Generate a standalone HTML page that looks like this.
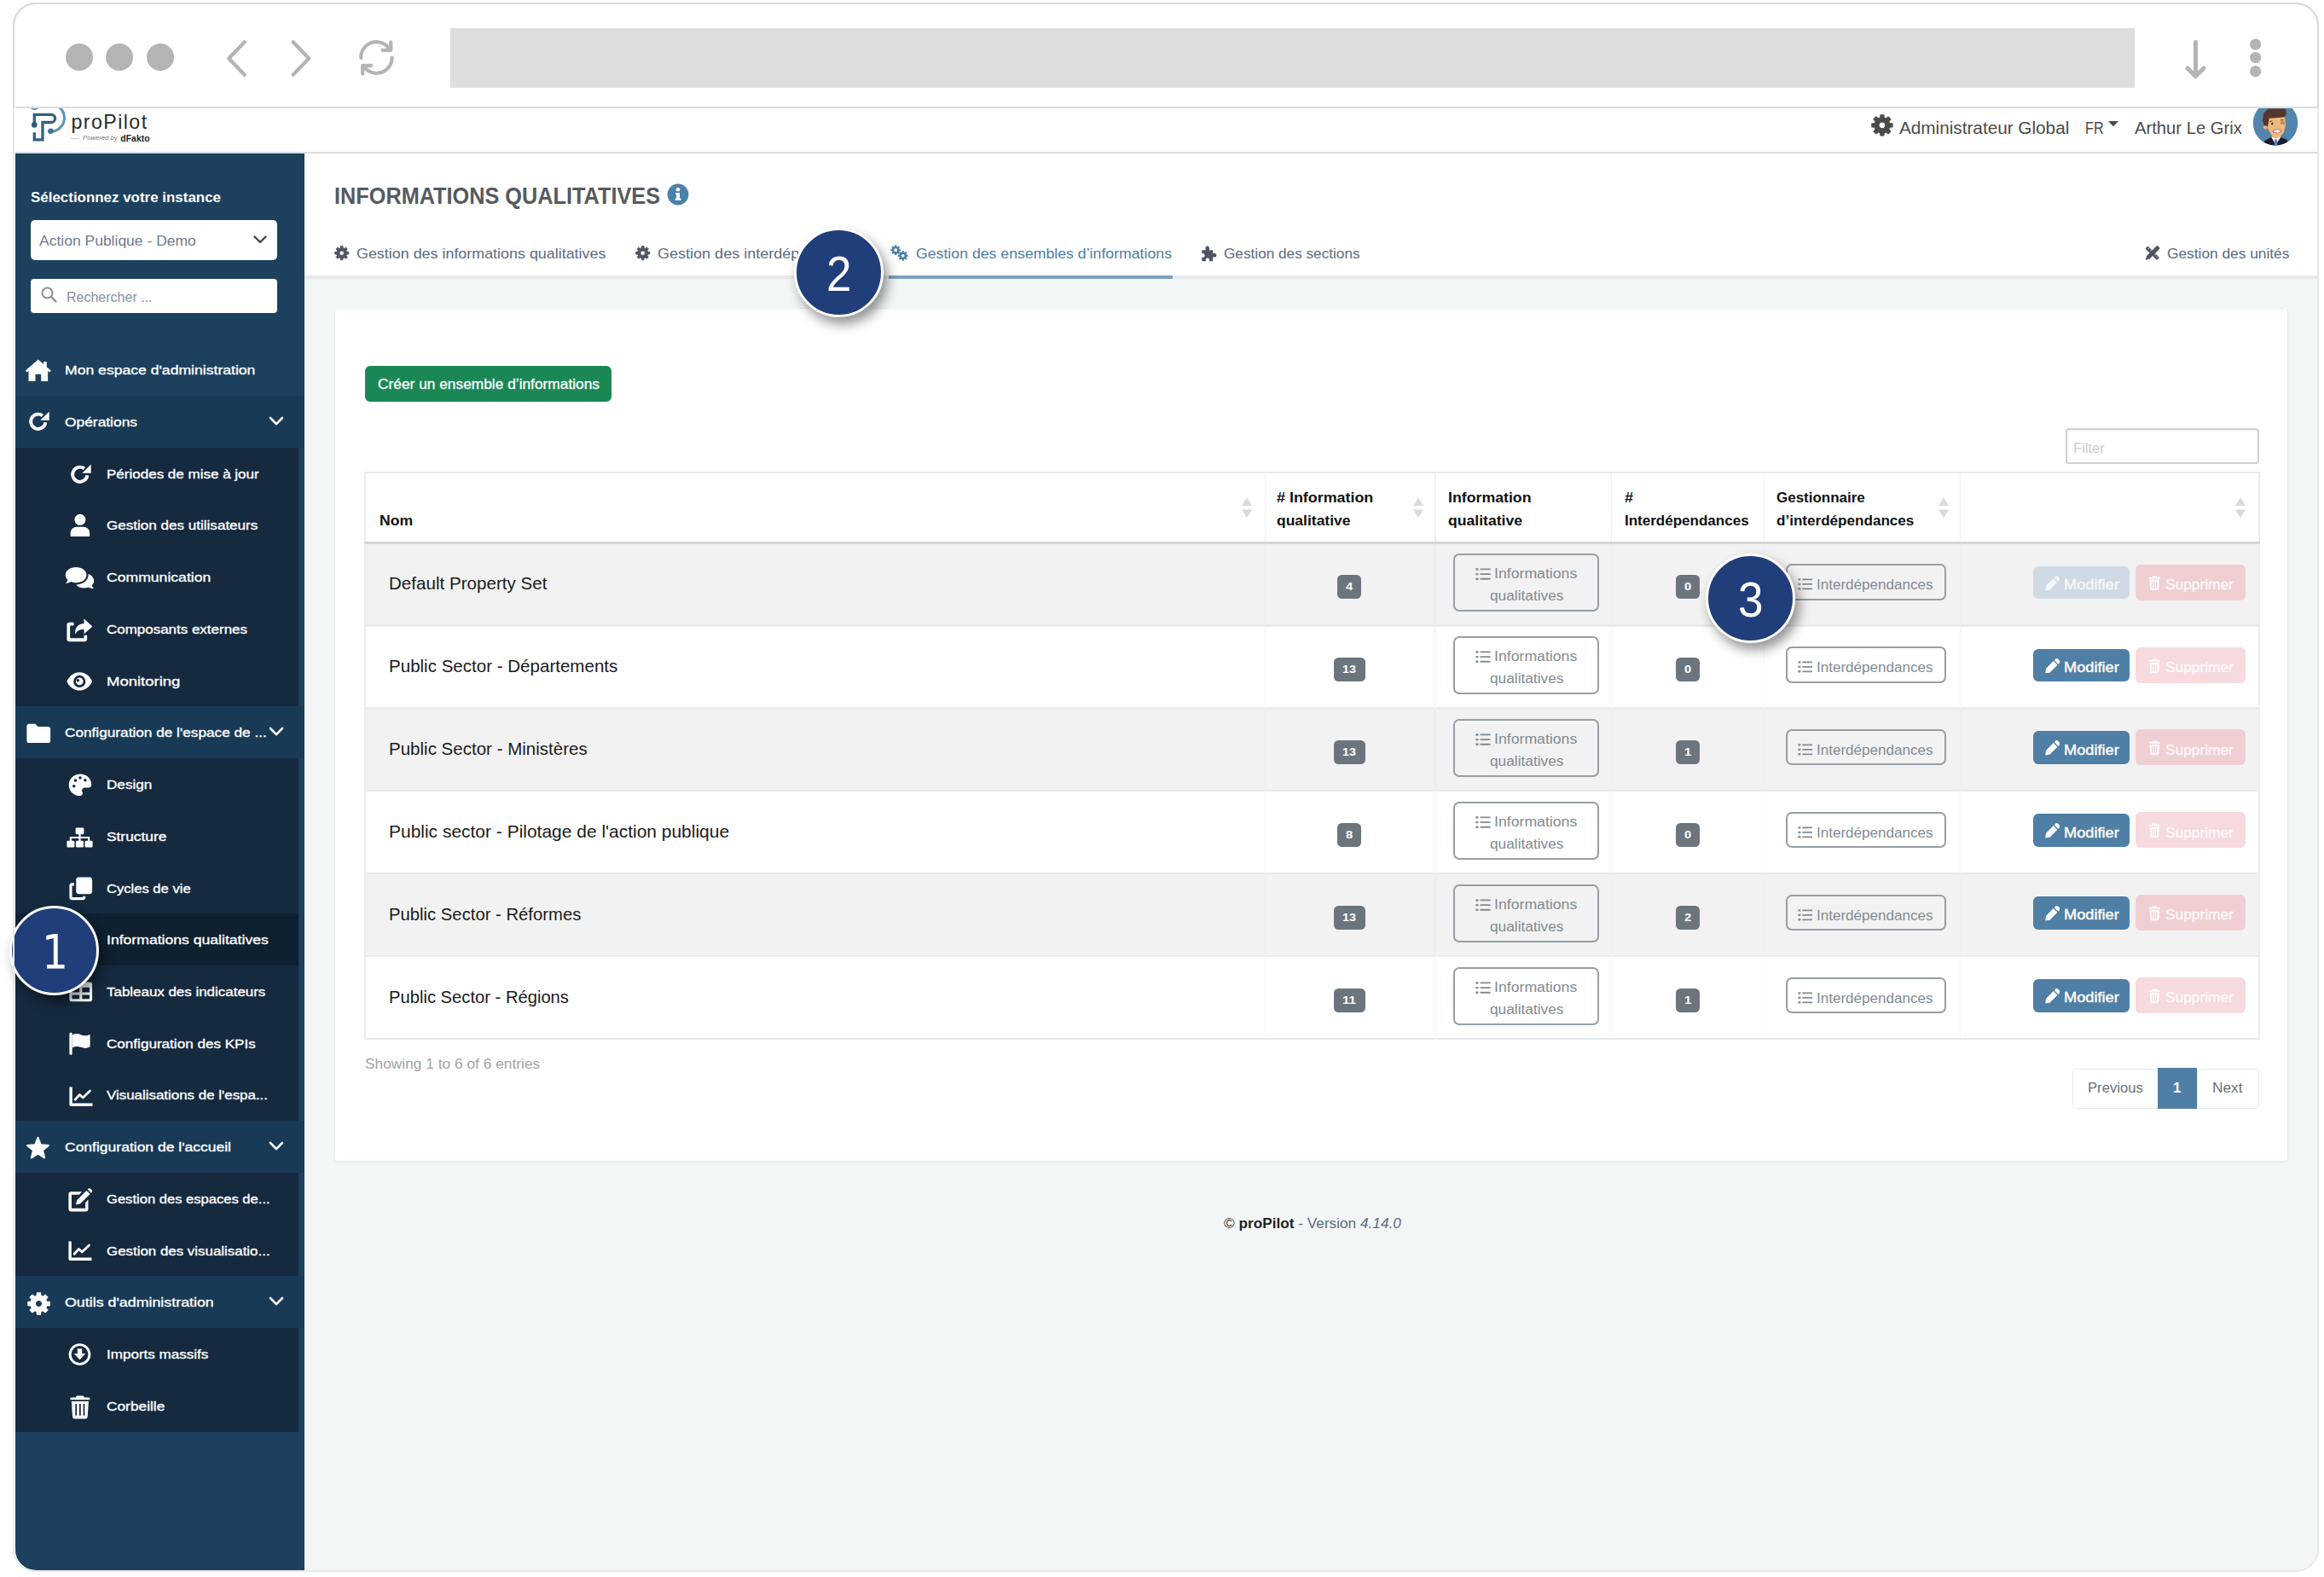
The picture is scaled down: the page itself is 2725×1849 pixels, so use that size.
<!DOCTYPE html>
<html lang="fr"><head><meta charset="utf-8"><title>proPilot - Informations qualitatives</title>
<style>
html,body{margin:0;padding:0;}
body{width:2725px;height:1849px;background:#fff;position:relative;overflow:hidden;font-family:"Liberation Sans",sans-serif;}
.a{position:absolute;display:block;box-sizing:border-box;}
.t{position:absolute;display:block;white-space:nowrap;transform-origin:0 50%;}
</style></head>
<body>
<div class="a" style="left:357.0px;top:180.0px;width:2360.0px;height:1661.0px;background:#f3f6f7;border-bottom-right-radius:24px;"></div>
<div class="a" style="left:357.0px;top:180.0px;width:2360.0px;height:143.0px;background:#fff;"></div>
<div class="a" style="left:18.0px;top:127.0px;width:2699.0px;height:52.0px;background:#fff;"></div>
<div class="a" style="left:18.0px;top:178.0px;width:2699.0px;height:2.4px;background:#dcdcdc;"></div>
<div class="a" style="left:18.0px;top:124.5px;width:2699.0px;height:2.6px;background:#dddddc;"></div>
<div class="a" style="left:18.0px;top:180.0px;width:339.0px;height:1661.0px;background:#1c405e;border-bottom-left-radius:24px;"></div>
<div class="a" style="left:76.7px;top:51.3px;width:32.0px;height:32.0px;background:#b4b4b4;border-radius:50%;"></div>
<div class="a" style="left:124.4px;top:51.3px;width:32.0px;height:32.0px;background:#b4b4b4;border-radius:50%;"></div>
<div class="a" style="left:172.0px;top:51.3px;width:32.0px;height:32.0px;background:#b4b4b4;border-radius:50%;"></div>
<svg class="a" style="left:240.0px;top:20.0px;" width="320.0" height="100.0" viewBox="240 20 320 100"><g fill="none" stroke="#b4b4b4" stroke-width="4.2" stroke-linecap="round" stroke-linejoin="round"><path d="M286.8 49.2 L268.2 68.5 L286.8 87.8"/><path d="M343.6 49.2 L362.3 68.5 L343.6 87.8"/><path d="M423.3 68 A18 18 0 0 1 457 58.3"/><path d="M458.3 49.3 L458.3 58.8 L448.6 58.8"/><path d="M459.6 67.6 A18 18 0 0 1 426.3 77.3"/><path d="M425.2 86.6 L425.2 76.9 L435 76.9"/></g></svg>
<div class="a" style="left:527.8px;top:33.0px;width:1975.2px;height:69.6px;background:#dededc;"></div>
<svg class="a" style="left:2550.0px;top:40.0px;" width="120.0" height="60.0" viewBox="2550 40 120 60"><g fill="none" stroke="#b4b4b4" stroke-width="5" stroke-linecap="round" stroke-linejoin="round"><path d="M2574.5 49.2 L2574.5 88"/><path d="M2565 80 L2574.5 89.4 L2584 80"/></g><g fill="#b4b4b4"><circle cx="2644.7" cy="52" r="6.6"/><circle cx="2644.7" cy="67.5" r="6.6"/><circle cx="2644.7" cy="83.7" r="6.6"/></g></svg>
<div class="a" style="left:18.0px;top:463.9px;width:339.0px;height:61.0px;background:#193a56;"></div>
<div class="a" style="left:18.0px;top:524.6px;width:332.0px;height:61.0px;background:#15293f;"></div>
<div class="a" style="left:18.0px;top:585.4px;width:332.0px;height:61.0px;background:#15293f;"></div>
<div class="a" style="left:18.0px;top:646.1px;width:332.0px;height:61.0px;background:#15293f;"></div>
<div class="a" style="left:18.0px;top:706.8px;width:332.0px;height:61.0px;background:#15293f;"></div>
<div class="a" style="left:18.0px;top:767.5px;width:332.0px;height:61.0px;background:#15293f;"></div>
<div class="a" style="left:18.0px;top:828.2px;width:339.0px;height:61.0px;background:#193a56;"></div>
<div class="a" style="left:18.0px;top:889.0px;width:332.0px;height:61.0px;background:#15293f;"></div>
<div class="a" style="left:18.0px;top:949.7px;width:332.0px;height:61.0px;background:#15293f;"></div>
<div class="a" style="left:18.0px;top:1010.4px;width:332.0px;height:61.0px;background:#15293f;"></div>
<div class="a" style="left:18.0px;top:1071.1px;width:332.0px;height:61.0px;background:#0f2030;"></div>
<div class="a" style="left:18.0px;top:1131.8px;width:332.0px;height:61.0px;background:#15293f;"></div>
<div class="a" style="left:18.0px;top:1192.6px;width:332.0px;height:61.0px;background:#15293f;"></div>
<div class="a" style="left:18.0px;top:1253.3px;width:332.0px;height:61.0px;background:#15293f;"></div>
<div class="a" style="left:18.0px;top:1314.0px;width:339.0px;height:61.0px;background:#193a56;"></div>
<div class="a" style="left:18.0px;top:1374.7px;width:332.0px;height:61.0px;background:#15293f;"></div>
<div class="a" style="left:18.0px;top:1435.4px;width:332.0px;height:61.0px;background:#15293f;"></div>
<div class="a" style="left:18.0px;top:1496.2px;width:339.0px;height:61.0px;background:#193a56;"></div>
<div class="a" style="left:18.0px;top:1556.9px;width:332.0px;height:61.0px;background:#15293f;"></div>
<div class="a" style="left:18.0px;top:1617.6px;width:332.0px;height:61.0px;background:#15293f;"></div>
<span class="t" id="t1" style="top:220.6px;font-size:17px;line-height:22px;color:#fff;font-weight:700;left:36.1px;transform:scaleX(0.9960);">Sélectionnez votre instance</span>
<div class="a" style="left:36.0px;top:258.0px;width:289.0px;height:46.7px;background:#fff;border-radius:5px;"></div>
<span class="t" id="t2" style="top:271.7px;font-size:17px;line-height:22px;color:#6d7b90;left:46.0px;transform:scaleX(1.0292);">Action Publique - Demo</span>
<svg class="a" style="left:295.0px;top:273.0px;" width="20.0" height="16.0" viewBox="0 0 20 16"><path d="M3.5 4.5 L10 11 L16.5 4.5" fill="none" stroke="#3a4654" stroke-width="2.4" stroke-linecap="round" stroke-linejoin="round"/></svg>
<div class="a" style="left:36.0px;top:327.0px;width:289.0px;height:39.6px;background:#fff;border-radius:4px;"></div>
<svg class="a" style="left:47.0px;top:335.0px;" width="22.0" height="22.0" viewBox="0 0 22 22"><circle cx="8.5" cy="8.5" r="6" fill="none" stroke="#8b8f96" stroke-width="2"/><path d="M13 13 L18.5 18.5" stroke="#8b8f96" stroke-width="2.4" stroke-linecap="round"/></svg>
<span class="t" id="t3" style="top:338.1px;font-size:16.5px;line-height:21px;color:#8791a0;left:77.5px;transform:scaleX(0.9698);">Rechercher ...</span>
<span class="t" id="t4" style="top:424.3px;font-size:15.3px;line-height:20px;color:#fff;-webkit-text-stroke:0.35px #fff;left:75.6px;transform:scaleX(1.1501);">Mon espace d'administration</span>
<span class="t" id="t5" style="top:485.0px;font-size:15.3px;line-height:20px;color:#fff;-webkit-text-stroke:0.35px #fff;left:75.6px;transform:scaleX(1.1359);">Opérations</span>
<svg class="a" style="left:314.0px;top:485.9px;" width="20.0" height="16.0" viewBox="0 0 20 16"><path d="M3 4 L10 11.2 L17 4" fill="none" stroke="#fff" stroke-width="2.6" stroke-linecap="round" stroke-linejoin="round"/></svg>
<span class="t" id="t6" style="top:545.7px;font-size:15.3px;line-height:20px;color:#fff;-webkit-text-stroke:0.35px #fff;left:124.7px;transform:scaleX(1.1120);">Périodes de mise à jour</span>
<span class="t" id="t7" style="top:606.4px;font-size:15.3px;line-height:20px;color:#fff;-webkit-text-stroke:0.35px #fff;left:124.7px;transform:scaleX(1.1151);">Gestion des utilisateurs</span>
<span class="t" id="t8" style="top:667.1px;font-size:15.3px;line-height:20px;color:#fff;-webkit-text-stroke:0.35px #fff;left:124.7px;transform:scaleX(1.1507);">Communication</span>
<span class="t" id="t9" style="top:727.9px;font-size:15.3px;line-height:20px;color:#fff;-webkit-text-stroke:0.35px #fff;left:124.7px;transform:scaleX(1.1089);">Composants externes</span>
<span class="t" id="t10" style="top:788.6px;font-size:15.3px;line-height:20px;color:#fff;-webkit-text-stroke:0.35px #fff;left:124.7px;transform:scaleX(1.2083);">Monitoring</span>
<span class="t" id="t11" style="top:849.3px;font-size:15.3px;line-height:20px;color:#fff;-webkit-text-stroke:0.35px #fff;left:75.6px;transform:scaleX(1.1254);">Configuration de l'espace de ...</span>
<svg class="a" style="left:314.0px;top:850.2px;" width="20.0" height="16.0" viewBox="0 0 20 16"><path d="M3 4 L10 11.2 L17 4" fill="none" stroke="#fff" stroke-width="2.6" stroke-linecap="round" stroke-linejoin="round"/></svg>
<span class="t" id="t12" style="top:910.0px;font-size:15.3px;line-height:20px;color:#fff;-webkit-text-stroke:0.35px #fff;left:124.7px;transform:scaleX(1.1192);">Design</span>
<span class="t" id="t13" style="top:970.7px;font-size:15.3px;line-height:20px;color:#fff;-webkit-text-stroke:0.35px #fff;left:124.7px;transform:scaleX(1.1327);">Structure</span>
<span class="t" id="t14" style="top:1031.5px;font-size:15.3px;line-height:20px;color:#fff;-webkit-text-stroke:0.35px #fff;left:124.7px;transform:scaleX(1.0839);">Cycles de vie</span>
<span class="t" id="t15" style="top:1092.2px;font-size:15.3px;line-height:20px;color:#fff;-webkit-text-stroke:0.35px #fff;left:124.7px;transform:scaleX(1.1506);">Informations qualitatives</span>
<span class="t" id="t16" style="top:1152.9px;font-size:15.3px;line-height:20px;color:#fff;-webkit-text-stroke:0.35px #fff;left:124.7px;transform:scaleX(1.1065);">Tableaux des indicateurs</span>
<span class="t" id="t17" style="top:1213.6px;font-size:15.3px;line-height:20px;color:#fff;-webkit-text-stroke:0.35px #fff;left:124.7px;transform:scaleX(1.1172);">Configuration des KPIs</span>
<span class="t" id="t18" style="top:1274.3px;font-size:15.3px;line-height:20px;color:#fff;-webkit-text-stroke:0.35px #fff;left:124.7px;transform:scaleX(1.1052);">Visualisations de l'espa...</span>
<span class="t" id="t19" style="top:1335.1px;font-size:15.3px;line-height:20px;color:#fff;-webkit-text-stroke:0.35px #fff;left:75.6px;transform:scaleX(1.1440);">Configuration de l'accueil</span>
<svg class="a" style="left:314.0px;top:1336.0px;" width="20.0" height="16.0" viewBox="0 0 20 16"><path d="M3 4 L10 11.2 L17 4" fill="none" stroke="#fff" stroke-width="2.6" stroke-linecap="round" stroke-linejoin="round"/></svg>
<span class="t" id="t20" style="top:1395.8px;font-size:15.3px;line-height:20px;color:#fff;-webkit-text-stroke:0.35px #fff;left:124.7px;transform:scaleX(1.0833);">Gestion des espaces de...</span>
<span class="t" id="t21" style="top:1456.5px;font-size:15.3px;line-height:20px;color:#fff;-webkit-text-stroke:0.35px #fff;left:124.7px;transform:scaleX(1.1046);">Gestion des visualisatio...</span>
<span class="t" id="t22" style="top:1517.2px;font-size:15.3px;line-height:20px;color:#fff;-webkit-text-stroke:0.35px #fff;left:75.6px;transform:scaleX(1.1652);">Outils d'administration</span>
<svg class="a" style="left:314.0px;top:1518.1px;" width="20.0" height="16.0" viewBox="0 0 20 16"><path d="M3 4 L10 11.2 L17 4" fill="none" stroke="#fff" stroke-width="2.6" stroke-linecap="round" stroke-linejoin="round"/></svg>
<span class="t" id="t23" style="top:1577.9px;font-size:15.3px;line-height:20px;color:#fff;-webkit-text-stroke:0.35px #fff;left:124.7px;transform:scaleX(1.1140);">Imports massifs</span>
<span class="t" id="t24" style="top:1638.7px;font-size:15.3px;line-height:20px;color:#fff;-webkit-text-stroke:0.35px #fff;left:124.7px;transform:scaleX(1.1313);">Corbeille</span>
<svg class="a" style="left:28.6px;top:420.2px;overflow:visible;" width="31.7" height="28.6" viewBox="0 0 32 28"><g fill="#fff"><path d="M16 1.2 L0.8 14.2 L2.6 16.3 L4.6 14.6 V26.8 H12.6 V18.6 H19.4 V26.8 H27.4 V14.6 L29.4 16.3 L31.2 14.2 L26 9.8 V3.6 H22.4 V6.7 Z"/></g></svg>
<svg class="a" style="left:32.4px;top:482.0px;overflow:visible;" width="26.6" height="24.0" viewBox="0 0 26 24"><g fill="#fff"><path d="M21 13.2 A8.6 8.6 0 1 1 17.6 5.4" fill="none" stroke="#fff" stroke-width="3.9"/><path d="M25.4 0.4 V10.8 H15 Z"/></g></svg>
<svg class="a" style="left:81.1px;top:543.8px;overflow:visible;" width="26.6" height="24.0" viewBox="0 0 26 24"><g fill="#fff"><path d="M21 13.2 A8.6 8.6 0 1 1 17.6 5.4" fill="none" stroke="#fff" stroke-width="3.9"/><path d="M25.4 0.4 V10.8 H15 Z"/></g></svg>
<svg class="a" style="left:81.8px;top:602.0px;overflow:visible;" width="23.8" height="27.6" viewBox="0 0 24 28"><g fill="#fff"><circle cx="12" cy="7.4" r="6.6"/><path d="M0.6 27.4 V23.4 C0.6 19 4 16 8 16 H16 C20 16 23.4 19 23.4 23.4 V27.4 Z"/></g></svg>
<svg class="a" style="left:76.0px;top:663.9px;overflow:visible;" width="35.0" height="26.7" viewBox="0 0 36 27"><g fill="#fff"><path d="M13.5 0.8 C6.3 0.8 0.8 5 0.8 10.3 C0.8 12.5 1.8 14.6 3.5 16.2 C3 17.8 2 19.2 0.8 20.2 C3.2 20.3 5.6 19.6 7.4 18.4 C9.2 19.2 11.3 19.6 13.5 19.6 C20.7 19.6 26.2 15.5 26.2 10.3 C26.2 5 20.7 0.8 13.5 0.8 Z"/><path d="M28.3 9 C28.4 9.5 28.4 9.9 28.4 10.3 C28.4 16.9 21.6 21.8 13.7 21.8 C15.6 24.4 19.2 26 23.2 26 C25.1 26 26.9 25.6 28.5 24.9 C30.2 26 32.5 26.6 35 26.4 C33.9 25.5 33 24.3 32.5 22.9 C34.1 21.5 35.2 19.7 35.2 17.6 C35.2 13.7 32.4 10.4 28.3 9 Z"/></g></svg>
<svg class="a" style="left:77.5px;top:724.7px;overflow:visible;" width="31.0" height="27.6" viewBox="0 0 31 28"><g fill="#fff"><path d="M20.5 20 V23.6 H4 V8.6 H8.4 V4.8 H3 C1.3 4.8 0.2 6 0.2 7.6 V24.6 C0.2 26.3 1.4 27.6 3 27.6 H21.4 C23.1 27.6 24.3 26.3 24.3 24.6 V20 Z"/><path d="M20.6 0.6 L30.6 9.6 L20.6 18.6 V13.2 C15 13.2 12 14.6 10.6 19 C9 12 12.6 6.4 20.6 6 Z"/></g></svg>
<svg class="a" style="left:78.0px;top:786.6px;overflow:visible;" width="30.5" height="23.8" viewBox="0 0 31 24"><g fill="#fff"><path fill-rule="evenodd" d="M15.5 1.2 C8.6 1.2 3 5.8 0.4 12 C3 18.2 8.6 22.8 15.5 22.8 C22.4 22.8 28 18.2 30.6 12 C28 5.8 22.4 1.2 15.5 1.2 Z M15.5 4.8 A7.2 7.2 0 1 1 15.5 19.2 A7.2 7.2 0 1 1 15.5 4.8 Z"/><path fill-rule="evenodd" d="M15.5 7.6 A4.4 4.4 0 1 1 15.5 16.4 A4.4 4.4 0 1 1 15.5 7.6 Z M13.6 9 A1.8 1.8 0 1 0 13.6 12.6 A1.8 1.8 0 1 0 13.6 9 Z"/></g></svg>
<svg class="a" style="left:30.5px;top:848.4px;overflow:visible;" width="28.5" height="23.8" viewBox="0 0 29 24"><g fill="#fff"><path d="M2.8 0.6 H10.6 L13.8 4 H26.2 C27.6 4 28.6 5 28.6 6.4 V21 C28.6 22.4 27.6 23.4 26.2 23.4 H2.8 C1.4 23.4 0.4 22.4 0.4 21 V3 C0.4 1.6 1.4 0.6 2.8 0.6 Z"/></g></svg>
<svg class="a" style="left:80.0px;top:906.5px;overflow:visible;" width="28.0" height="26.6" viewBox="0 0 28 27"><g fill="#fff"><path fill-rule="evenodd" d="M13.4 0.5 C6 0.9 0.5 6.6 0.5 13.6 C0.5 21 6.6 26.6 13.6 26.5 C16.4 26.4 17.6 24 16.6 21.8 C15.4 19.4 17 16.8 19.6 16.8 H24 C26 16.8 27.5 15.2 27.5 13.2 C27.4 5.6 21 0.2 13.4 0.5 Z M6.6 16.8 A1.8 1.8 0 1 1 6.6 13.2 A1.8 1.8 0 1 1 6.6 16.8 Z M8.4 10 A1.8 1.8 0 1 1 8.4 6.4 A1.8 1.8 0 1 1 8.4 10 Z M14 6.8 A1.8 1.8 0 1 1 14 3.2 A1.8 1.8 0 1 1 14 6.8 Z M20 9.6 A1.8 1.8 0 1 1 20 6 A1.8 1.8 0 1 1 20 9.6 Z"/></g></svg>
<svg class="a" style="left:78.0px;top:970.0px;overflow:visible;" width="31.0" height="24.0" viewBox="0 0 31 24"><g fill="#fff"><rect x="10.6" y="0.4" width="9.8" height="7.8" rx="1.4"/><rect x="0.4" y="15.8" width="9" height="7.8" rx="1.4"/><rect x="11" y="15.8" width="9" height="7.8" rx="1.4"/><rect x="21.6" y="15.8" width="9" height="7.8" rx="1.4"/><path d="M15.5 8 V16 M4.9 16 V12 H26.1 V16" fill="none" stroke="#fff" stroke-width="2.2"/></g></svg>
<svg class="a" style="left:80.5px;top:1027.6px;overflow:visible;" width="27.5" height="27.6" viewBox="0 0 28 28"><g fill="#fff"><path d="M11.4 0.4 H24.6 C26.3 0.4 27.6 1.7 27.6 3.4 V17.6 C27.6 19.3 26.3 20.6 24.6 20.6 H11.4 C9.7 20.6 8.4 19.3 8.4 17.6 V3.4 C8.4 1.7 9.7 0.4 11.4 0.4 Z"/><path d="M6 7.4 H3.4 C1.7 7.4 0.4 8.7 0.4 10.4 V24.6 C0.4 26.3 1.7 27.6 3.4 27.6 H16.6 C18.3 27.6 19.6 26.3 19.6 24.6 V23 H16.4 V24.4 H3.6 V10.6 H6 Z"/></g></svg>
<svg class="a" style="left:80.5px;top:1092.5px;overflow:visible;" width="27.5" height="23.0" viewBox="0 0 28 24"><g fill="#fff"><rect x="0.5" y="1.5" width="5" height="5" rx="1"/><rect x="0.5" y="9.5" width="5" height="5" rx="1"/><rect x="0.5" y="17.5" width="5" height="5" rx="1"/><rect x="9" y="2.4" width="18.5" height="3.2" rx="1"/><rect x="9" y="10.4" width="18.5" height="3.2" rx="1"/><rect x="9" y="18.4" width="18.5" height="3.2" rx="1"/></g></svg>
<svg class="a" style="left:80.5px;top:1151.1px;overflow:visible;" width="27.5" height="23.8" viewBox="0 0 28 24"><g fill="#fff"><path fill-rule="evenodd" d="M3 0.4 H25 C26.6 0.4 27.6 1.4 27.6 3 V21 C27.6 22.6 26.6 23.6 25 23.6 H3 C1.4 23.6 0.4 22.6 0.4 21 V3 C0.4 1.4 1.4 0.4 3 0.4 Z M3.6 6.8 V12.6 H12.4 V6.8 Z M15.6 6.8 V12.6 H24.4 V6.8 Z M3.6 15.6 V20.4 H12.4 V15.6 Z M15.6 15.6 V20.4 H24.4 V15.6 Z"/></g></svg>
<svg class="a" style="left:80.5px;top:1210.2px;overflow:visible;" width="25.0" height="27.6" viewBox="0 0 26 28"><g fill="#fff"><rect x="0.4" y="0.4" width="3.4" height="27.2" rx="1.4"/><path d="M3.8 3.2 C8 1 11 1.6 14.4 3 C18 4.4 21 4.6 25.6 2.4 V17.6 C21 20 18 19.6 14.4 18.2 C11 17 8 16.6 3.8 18.8 Z"/></g></svg>
<svg class="a" style="left:80.5px;top:1274.1px;overflow:visible;" width="28.0" height="23.8" viewBox="0 0 28 24"><g fill="#fff"><path d="M2 0.4 V21.4 H27.6" fill="none" stroke="#fff" stroke-width="3.4" stroke-linejoin="round"/><path d="M7 15.4 L12.4 9.6 L16.2 13.2 L24.6 5" fill="none" stroke="#fff" stroke-width="2.8" stroke-linecap="round" stroke-linejoin="round"/></g></svg>
<svg class="a" style="left:30.2px;top:1331.6px;overflow:visible;" width="29.0" height="28.0" viewBox="0 0 30 28"><g fill="#fff"><path d="M15.00 1.40 L18.53 10.15 L27.93 10.80 L20.71 16.85 L22.99 26.00 L15.00 21.00 L7.01 26.00 L9.29 16.85 L2.07 10.80 L11.47 10.15 Z" stroke="#fff" stroke-width="2" stroke-linejoin="round"/></g></svg>
<svg class="a" style="left:79.6px;top:1392.5px;overflow:visible;" width="28.6" height="28.0" viewBox="0 0 29 28"><g fill="#fff"><path d="M20.4 17 V24 H4 V7.6 H13 L16.4 4.2 H3.2 C1.6 4.2 0.4 5.4 0.4 7 V24.8 C0.4 26.4 1.6 27.6 3.2 27.6 H21 C22.6 27.6 23.8 26.4 23.8 24.8 V13.6 Z"/><path d="M21.8 2.6 L26 6.8 L14.4 18.4 L9.2 19.6 L10.2 14.2 Z M23 1.4 L24 0.4 C24.8 -0.2 25.8 -0.2 26.6 0.6 L28 2 C28.8 2.8 28.8 3.8 28.2 4.6 L27.2 5.6 Z"/></g></svg>
<svg class="a" style="left:79.9px;top:1454.8px;overflow:visible;" width="28.0" height="23.8" viewBox="0 0 28 24"><g fill="#fff"><path d="M2 0.4 V21.4 H27.6" fill="none" stroke="#fff" stroke-width="3.4" stroke-linejoin="round"/><path d="M7 15.4 L12.4 9.6 L16.2 13.2 L24.6 5" fill="none" stroke="#fff" stroke-width="2.8" stroke-linecap="round" stroke-linejoin="round"/></g></svg>
<svg class="a" style="left:31.5px;top:1515.0px;overflow:visible;" width="27.0" height="27.0" viewBox="0 0 28 28"><g fill="#fff"><path fill-rule="evenodd" d="M23.51 11.64 L27.04 11.94 L27.04 16.06 L23.51 16.36 L22.40 19.05 L24.68 21.76 L21.76 24.68 L19.05 22.40 L16.36 23.51 L16.06 27.04 L11.94 27.04 L11.64 23.51 L8.95 22.40 L6.24 24.68 L3.32 21.76 L5.60 19.05 L4.49 16.36 L0.96 16.06 L0.96 11.94 L4.49 11.64 L5.60 8.95 L3.32 6.24 L6.24 3.32 L8.95 5.60 L11.64 4.49 L11.94 0.96 L16.06 0.96 L16.36 4.49 L19.05 5.60 L21.76 3.32 L24.68 6.24 L22.40 8.95 Z M18.30 14.00 A4.3 4.3 0 1 0 9.70 14.00 A4.3 4.3 0 1 0 18.30 14.00 Z" stroke="#fff" stroke-width="1.4" stroke-linejoin="round"/></g></svg>
<svg class="a" style="left:80.4px;top:1573.7px;overflow:visible;" width="27.0" height="28.0" viewBox="0 0 28 28"><g fill="#fff"><circle cx="14" cy="14" r="11.8" fill="none" stroke="#fff" stroke-width="3"/><path d="M11.2 7 H16.8 V13 H21 L14 20.6 L7 13 H11.2 Z"/></g></svg>
<svg class="a" style="left:82.1px;top:1635.8px;overflow:visible;" width="23.7" height="28.0" viewBox="0 0 24 28"><g fill="#fff"><path d="M8 0.4 H16 L17.2 2.4 H22.6 C23.2 2.4 23.6 2.8 23.6 3.4 V5.2 H0.4 V3.4 C0.4 2.8 0.8 2.4 1.4 2.4 H6.8 Z"/><path fill-rule="evenodd" d="M1.8 7 H22.2 L21 25.2 C20.9 26.6 19.8 27.6 18.4 27.6 H5.6 C4.2 27.6 3.1 26.6 3 25.2 Z M6.4 10 V24 H8.2 V10 Z M11.1 10 V24 H12.9 V10 Z M15.8 10 V24 H17.6 V10 Z"/></g></svg>
<svg class="a" style="left:25.0px;top:127.0px;" width="60.0" height="52.0" viewBox="25 127 60 52"><g fill="none" stroke-linecap="round" stroke-linejoin="round"><path d="M63.64 122.75 A16 16 0 0 1 58.94 154.19" stroke="#5f97b0" stroke-width="3.1"/><path d="M37 126.5 A6 6 0 0 0 44 126.5" stroke="#5f97b0" stroke-width="2.6"/><path d="M40.3 146.3 V134.4 H60 A4.55 4.55 0 0 1 60 143.5 H50 V163.8 H40.3 V155.2" stroke="#2f6285" stroke-width="3.3" stroke-linejoin="miter" stroke-linecap="butt"/></g><circle cx="40.3" cy="146.4" r="3.3" fill="#2a5a7d"/><circle cx="59.4" cy="153.7" r="3.3" fill="#3f7595"/></svg>
<span class="t" id="t25" style="top:127.5px;font-size:23.2px;line-height:30px;color:#2b2b2b;left:83.5px;letter-spacing:1.422px;">proPilot</span>
<div class="a" style="left:82.8px;top:161.8px;width:10.6px;height:1.2px;background:#c9c9c9;"></div>
<span class="t" id="t26" style="top:157.2px;font-size:8px;line-height:10px;color:#777;font-style:italic;left:97.0px;transform:scaleX(0.9609);">Powered by</span>
<span class="t" id="t27" style="top:154.6px;font-size:10.5px;line-height:14px;color:#222;font-weight:700;left:141.3px;">dFakto</span>
<svg class="a" style="left:2193.8px;top:134.1px;overflow:visible;" width="25.8" height="25.8" viewBox="0 0 28 28"><g fill="#4a4a4a"><path fill-rule="evenodd" d="M23.51 11.64 L27.04 11.94 L27.04 16.06 L23.51 16.36 L22.40 19.05 L24.68 21.76 L21.76 24.68 L19.05 22.40 L16.36 23.51 L16.06 27.04 L11.94 27.04 L11.64 23.51 L8.95 22.40 L6.24 24.68 L3.32 21.76 L5.60 19.05 L4.49 16.36 L0.96 16.06 L0.96 11.94 L4.49 11.64 L5.60 8.95 L3.32 6.24 L6.24 3.32 L8.95 5.60 L11.64 4.49 L11.94 0.96 L16.06 0.96 L16.36 4.49 L19.05 5.60 L21.76 3.32 L24.68 6.24 L22.40 8.95 Z M18.30 14.00 A4.3 4.3 0 1 0 9.70 14.00 A4.3 4.3 0 1 0 18.30 14.00 Z" stroke="#4a4a4a" stroke-width="1.4" stroke-linejoin="round"/></g></svg>
<span class="t" id="t28" style="top:135.8px;font-size:20.5px;line-height:27px;color:#4a4a4a;left:2226.9px;transform:scaleX(1.0110);">Administrateur Global</span>
<span class="t" id="t29" style="top:135.8px;font-size:20.5px;line-height:27px;color:#4a4a4a;left:2445.0px;transform:scaleX(0.7904);">FR</span>
<svg class="a" style="left:2471.0px;top:141.0px;" width="14.0" height="8.0" viewBox="0 0 14 8"><path d="M1 1 H13 L7 7.2 Z" fill="#4a4a4a"/></svg>
<span class="t" id="t30" style="top:135.8px;font-size:20.5px;line-height:27px;color:#4a4a4a;left:2502.5px;transform:scaleX(0.9866);">Arthur Le Grix</span>
<svg class="a" style="left:2630.0px;top:120.0px;" width="80.0" height="60.0" viewBox="0 0 2103 1577"><defs><clipPath id="avc"><circle cx="1000" cy="640" r="690"/></clipPath><clipPath id="avt"><rect x="0" y="185" width="2103" height="1400"/></clipPath></defs><g clip-path="url(#avt)"><g clip-path="url(#avc)"><rect x="0" y="0" width="2103" height="1577" fill="#5285ab"/><path d="M900 980 L1150 980 L1170 1120 L1010 1200 L870 1120 Z" fill="#e9a96c"/><path d="M640 1200 L870 1070 L1010 1290 L1170 1070 L1350 1150 L1450 1400 L600 1400 Z" fill="#1c1f2e"/><path d="M870 1060 L1010 1300 L1170 1060 L1010 1110 Z" fill="#fff"/><path d="M980 1140 H1050 L1065 1340 H965 Z" fill="#4a86d6"/><circle cx="690" cy="770" r="62" fill="#eeb57a"/><path d="M760 470 L1290 440 L1315 700 L1255 930 L1130 1075 L1000 1100 L870 1000 L765 800 Z" fill="#f0b87c"/><path d="M780 195 L1320 195 L1335 340 L1280 455 L810 490 L770 720 L660 725 L600 560 L640 330 Z" fill="#54362a"/><ellipse cx="900" cy="655" rx="28" ry="40" fill="#2a2622"/><path d="M830 600 L900 570" stroke="#4a3020" stroke-width="26"/><rect x="1160" y="590" width="120" height="80" fill="#a68a62"/><path d="M1160 545 H1250" stroke="#4a3020" stroke-width="30"/><ellipse cx="1050" cy="890" rx="135" ry="62" fill="#b5614a"/><ellipse cx="1050" cy="890" rx="110" ry="42" fill="#fff"/></g></g></svg>
<span class="t" id="t31" style="top:212.3px;font-size:27.5px;line-height:36px;color:#555a60;font-weight:700;left:392.0px;transform:scaleX(0.9193);">INFORMATIONS QUALITATIVES</span>
<svg class="a" style="left:782.0px;top:215.0px;" width="26.0" height="26.0" viewBox="0 0 26 26"><circle cx="13" cy="13" r="12.4" fill="#4b80a8"/><rect x="11.2" y="11" width="3.8" height="8.4" fill="#fff"/><rect x="10" y="11" width="3" height="2.2" fill="#fff"/><rect x="9.6" y="17.6" width="7" height="2.2" fill="#fff"/><circle cx="13" cy="7.2" r="2.3" fill="#fff"/></svg>
<div class="a" style="left:357.0px;top:322.6px;width:2360.0px;height:4.3px;background:#e6e9ed;"></div>
<svg class="a" style="left:391.6px;top:288.0px;overflow:visible;" width="17.4" height="17.4" viewBox="0 0 28 28"><g fill="#4d5561"><path fill-rule="evenodd" d="M23.51 11.64 L27.04 11.94 L27.04 16.06 L23.51 16.36 L22.40 19.05 L24.68 21.76 L21.76 24.68 L19.05 22.40 L16.36 23.51 L16.06 27.04 L11.94 27.04 L11.64 23.51 L8.95 22.40 L6.24 24.68 L3.32 21.76 L5.60 19.05 L4.49 16.36 L0.96 16.06 L0.96 11.94 L4.49 11.64 L5.60 8.95 L3.32 6.24 L6.24 3.32 L8.95 5.60 L11.64 4.49 L11.94 0.96 L16.06 0.96 L16.36 4.49 L19.05 5.60 L21.76 3.32 L24.68 6.24 L22.40 8.95 Z M18.30 14.00 A4.3 4.3 0 1 0 9.70 14.00 A4.3 4.3 0 1 0 18.30 14.00 Z" stroke="#4d5561" stroke-width="1.4" stroke-linejoin="round"/></g></svg>
<span class="t" id="t32" style="top:286.5px;font-size:17px;line-height:22px;color:#5c6b7e;left:418.0px;transform:scaleX(1.0525);">Gestion des informations qualitatives</span>
<svg class="a" style="left:744.7px;top:288.0px;overflow:visible;" width="17.4" height="17.4" viewBox="0 0 28 28"><g fill="#4d5561"><path fill-rule="evenodd" d="M23.51 11.64 L27.04 11.94 L27.04 16.06 L23.51 16.36 L22.40 19.05 L24.68 21.76 L21.76 24.68 L19.05 22.40 L16.36 23.51 L16.06 27.04 L11.94 27.04 L11.64 23.51 L8.95 22.40 L6.24 24.68 L3.32 21.76 L5.60 19.05 L4.49 16.36 L0.96 16.06 L0.96 11.94 L4.49 11.64 L5.60 8.95 L3.32 6.24 L6.24 3.32 L8.95 5.60 L11.64 4.49 L11.94 0.96 L16.06 0.96 L16.36 4.49 L19.05 5.60 L21.76 3.32 L24.68 6.24 L22.40 8.95 Z M18.30 14.00 A4.3 4.3 0 1 0 9.70 14.00 A4.3 4.3 0 1 0 18.30 14.00 Z" stroke="#4d5561" stroke-width="1.4" stroke-linejoin="round"/></g></svg>
<span class="t" id="t33" style="top:286.5px;font-size:17px;line-height:22px;color:#5c6b7e;left:771.0px;transform:scaleX(1.0602);">Gestion des interdépendances</span>
<svg class="a" style="left:1044.0px;top:287.0px;overflow:visible;" width="21.0" height="19.0" viewBox="0 0 22 20"><g fill="#4b7ba3"><path fill-rule="evenodd" d="M10.96 5.36 L12.71 5.47 L12.71 7.53 L10.96 7.64 L10.46 8.84 L11.63 10.16 L10.16 11.63 L8.84 10.46 L7.64 10.96 L7.53 12.71 L5.47 12.71 L5.36 10.96 L4.16 10.46 L2.84 11.63 L1.37 10.16 L2.54 8.84 L2.04 7.64 L0.29 7.53 L0.29 5.47 L2.04 5.36 L2.54 4.16 L1.37 2.84 L2.84 1.37 L4.16 2.54 L5.36 2.04 L5.47 0.29 L7.53 0.29 L7.64 2.04 L8.84 2.54 L10.16 1.37 L11.63 2.84 L10.46 4.16 Z M8.50 6.50 A2.0 2.0 0 1 0 4.50 6.50 A2.0 2.0 0 1 0 8.50 6.50 Z"/><path fill-rule="evenodd" d="M19.96 12.36 L21.71 12.47 L21.71 14.53 L19.96 14.64 L19.46 15.84 L20.63 17.16 L19.16 18.63 L17.84 17.46 L16.64 17.96 L16.53 19.71 L14.47 19.71 L14.36 17.96 L13.16 17.46 L11.84 18.63 L10.37 17.16 L11.54 15.84 L11.04 14.64 L9.29 14.53 L9.29 12.47 L11.04 12.36 L11.54 11.16 L10.37 9.84 L11.84 8.37 L13.16 9.54 L14.36 9.04 L14.47 7.29 L16.53 7.29 L16.64 9.04 L17.84 9.54 L19.16 8.37 L20.63 9.84 L19.46 11.16 Z M17.50 13.50 A2.0 2.0 0 1 0 13.50 13.50 A2.0 2.0 0 1 0 17.50 13.50 Z"/></g></svg>
<span class="t" id="t34" style="top:286.5px;font-size:17px;line-height:22px;color:#4f7da3;left:1074.0px;transform:scaleX(1.0409);">Gestion des ensembles d’informations</span>
<div class="a" style="left:1042.0px;top:322.6px;width:332.7px;height:4.4px;background:#7fa0bb;"></div>
<svg class="a" style="left:1408.2px;top:287.8px;overflow:visible;" width="18.5" height="18.5" viewBox="0 0 20 20"><g fill="#4d5561"><path d="M6.4 5.6 C5.2 3.4 6.2 0.6 8.4 0.6 C10.6 0.6 11.6 3.4 10.4 5.6 H15.2 V10 C17.4 8.8 20 9.8 20 12.2 C20 14.6 17.4 15.6 15.2 14.4 V19.6 H10.6 C11.6 17.6 10.6 15.6 8.6 15.6 C6.6 15.6 5.6 17.6 6.6 19.6 H1.4 V14.6 C3.2 15.6 5 14.4 5 12.4 C5 10.4 3.2 9.2 1.4 10.2 V5.6 Z"/></g></svg>
<span class="t" id="t35" style="top:286.5px;font-size:17px;line-height:22px;color:#5c6b7e;left:1435.0px;transform:scaleX(1.0113);">Gestion des sections</span>
<svg class="a" style="left:2514.6px;top:288.2px;overflow:visible;" width="17.5" height="17.5" viewBox="0 0 20 20"><g fill="#4d5561"><path d="M4 0.6 L19.4 16 L16 19.4 L0.6 4 Z"/><path d="M15.4 0.6 C16 0 17 0 17.6 0.6 L19.4 2.4 C20 3 20 4 19.4 4.6 L6.4 17.6 L0.8 19.2 L2.4 13.6 Z"/><g stroke="white" stroke-width="1.1" stroke-opacity="0.85"><path d="M6.2 2.8 L4.4 4.6 M9 5.6 L7.2 7.4 M14.6 11.2 L12.8 13 M17.4 14 L15.6 15.8"/></g></g></svg>
<span class="t" id="t36" style="top:286.5px;font-size:17px;line-height:22px;color:#5c6b7e;left:2541.0px;transform:scaleX(1.0184);">Gestion des unités</span>
<div class="a" style="left:392.0px;top:361.0px;width:2291.0px;height:1001.0px;background:#fff;border:1.5px solid #e9edf0;border-radius:4px;box-shadow:0 1px 2px rgba(0,0,0,.04);"></div>
<div class="a" style="left:427.7px;top:429.0px;width:289.8px;height:42.0px;background:#1b8755;border-radius:6px;"></div>
<span class="t" id="t37" style="top:439.5px;font-size:16.5px;line-height:21px;color:#fff;-webkit-text-stroke:0.3px #fff;left:442.6px;transform:scaleX(1.0500);">Créer un ensemble d’informations</span>
<div class="a" style="left:2422.0px;top:501.7px;width:226.5px;height:42.3px;background:#fff;border:2px solid #d0d0d0;border-radius:4px;box-shadow:inset 0 1px 2px rgba(0,0,0,.08);"></div>
<span class="t" id="t38" style="top:514.5px;font-size:16px;line-height:21px;color:#c8ccd0;left:2431.0px;transform:scaleX(1.0348);">Filter</span>
<div class="a" style="left:428.0px;top:553.8px;width:2220.5px;height:82.7px;background:#fff;"></div>
<div class="a" style="left:428.0px;top:636.5px;width:2220.5px;height:97.0px;background:#f2f2f2;"></div>
<div class="a" style="left:428.0px;top:733.5px;width:2220.5px;height:97.0px;background:#fff;"></div>
<div class="a" style="left:428.0px;top:830.4px;width:2220.5px;height:97.0px;background:#f2f2f2;"></div>
<div class="a" style="left:428.0px;top:927.4px;width:2220.5px;height:97.0px;background:#fff;"></div>
<div class="a" style="left:428.0px;top:1024.3px;width:2220.5px;height:97.0px;background:#f2f2f2;"></div>
<div class="a" style="left:428.0px;top:1121.2px;width:2220.5px;height:97.0px;background:#fff;"></div>
<div class="a" style="left:428.0px;top:732.2px;width:2220.5px;height:2.4px;background:#eaebeb;"></div>
<div class="a" style="left:428.0px;top:829.2px;width:2220.5px;height:2.4px;background:#eaebeb;"></div>
<div class="a" style="left:428.0px;top:926.1px;width:2220.5px;height:2.4px;background:#eaebeb;"></div>
<div class="a" style="left:428.0px;top:1023.1px;width:2220.5px;height:2.4px;background:#eaebeb;"></div>
<div class="a" style="left:428.0px;top:1120.0px;width:2220.5px;height:2.4px;background:#eaebeb;"></div>
<div class="a" style="left:428.0px;top:1217.0px;width:2220.5px;height:2.4px;background:#e6e8e9;"></div>
<div class="a" style="left:1482.6px;top:553.8px;width:1.6px;height:82.7px;background:#f0f1f2;"></div>
<div class="a" style="left:1482.6px;top:636.5px;width:1.6px;height:97.0px;background:#eeeeee;"></div>
<div class="a" style="left:1482.6px;top:733.5px;width:1.6px;height:97.0px;background:#f5f6f7;"></div>
<div class="a" style="left:1482.6px;top:830.4px;width:1.6px;height:97.0px;background:#eeeeee;"></div>
<div class="a" style="left:1482.6px;top:927.4px;width:1.6px;height:97.0px;background:#f5f6f7;"></div>
<div class="a" style="left:1482.6px;top:1024.3px;width:1.6px;height:97.0px;background:#eeeeee;"></div>
<div class="a" style="left:1482.6px;top:1121.2px;width:1.6px;height:97.0px;background:#f5f6f7;"></div>
<div class="a" style="left:1682.2px;top:553.8px;width:1.6px;height:82.7px;background:#f0f1f2;"></div>
<div class="a" style="left:1682.2px;top:636.5px;width:1.6px;height:97.0px;background:#eeeeee;"></div>
<div class="a" style="left:1682.2px;top:733.5px;width:1.6px;height:97.0px;background:#f5f6f7;"></div>
<div class="a" style="left:1682.2px;top:830.4px;width:1.6px;height:97.0px;background:#eeeeee;"></div>
<div class="a" style="left:1682.2px;top:927.4px;width:1.6px;height:97.0px;background:#f5f6f7;"></div>
<div class="a" style="left:1682.2px;top:1024.3px;width:1.6px;height:97.0px;background:#eeeeee;"></div>
<div class="a" style="left:1682.2px;top:1121.2px;width:1.6px;height:97.0px;background:#f5f6f7;"></div>
<div class="a" style="left:1888.7px;top:553.8px;width:1.6px;height:82.7px;background:#f0f1f2;"></div>
<div class="a" style="left:1888.7px;top:636.5px;width:1.6px;height:97.0px;background:#eeeeee;"></div>
<div class="a" style="left:1888.7px;top:733.5px;width:1.6px;height:97.0px;background:#f5f6f7;"></div>
<div class="a" style="left:1888.7px;top:830.4px;width:1.6px;height:97.0px;background:#eeeeee;"></div>
<div class="a" style="left:1888.7px;top:927.4px;width:1.6px;height:97.0px;background:#f5f6f7;"></div>
<div class="a" style="left:1888.7px;top:1024.3px;width:1.6px;height:97.0px;background:#eeeeee;"></div>
<div class="a" style="left:1888.7px;top:1121.2px;width:1.6px;height:97.0px;background:#f5f6f7;"></div>
<div class="a" style="left:2067.9px;top:553.8px;width:1.6px;height:82.7px;background:#f0f1f2;"></div>
<div class="a" style="left:2067.9px;top:636.5px;width:1.6px;height:97.0px;background:#eeeeee;"></div>
<div class="a" style="left:2067.9px;top:733.5px;width:1.6px;height:97.0px;background:#f5f6f7;"></div>
<div class="a" style="left:2067.9px;top:830.4px;width:1.6px;height:97.0px;background:#eeeeee;"></div>
<div class="a" style="left:2067.9px;top:927.4px;width:1.6px;height:97.0px;background:#f5f6f7;"></div>
<div class="a" style="left:2067.9px;top:1024.3px;width:1.6px;height:97.0px;background:#eeeeee;"></div>
<div class="a" style="left:2067.9px;top:1121.2px;width:1.6px;height:97.0px;background:#f5f6f7;"></div>
<div class="a" style="left:2297.7px;top:553.8px;width:1.6px;height:82.7px;background:#f0f1f2;"></div>
<div class="a" style="left:2297.7px;top:636.5px;width:1.6px;height:97.0px;background:#eeeeee;"></div>
<div class="a" style="left:2297.7px;top:733.5px;width:1.6px;height:97.0px;background:#f5f6f7;"></div>
<div class="a" style="left:2297.7px;top:830.4px;width:1.6px;height:97.0px;background:#eeeeee;"></div>
<div class="a" style="left:2297.7px;top:927.4px;width:1.6px;height:97.0px;background:#f5f6f7;"></div>
<div class="a" style="left:2297.7px;top:1024.3px;width:1.6px;height:97.0px;background:#eeeeee;"></div>
<div class="a" style="left:2297.7px;top:1121.2px;width:1.6px;height:97.0px;background:#f5f6f7;"></div>
<div class="a" style="left:427.0px;top:552.8px;width:2222.5px;height:2.2px;background:#ebebeb;"></div>
<div class="a" style="left:427.0px;top:553.8px;width:2.0px;height:664.4px;background:#ebeced;"></div>
<div class="a" style="left:2647.5px;top:553.8px;width:2.0px;height:664.4px;background:#ebeced;"></div>
<div class="a" style="left:427.0px;top:635.1px;width:2222.5px;height:2.8px;background:#d6d7d8;"></div>
<span class="t" id="t39" style="top:599.8px;font-size:16.5px;line-height:21px;color:#111;font-weight:700;left:444.8px;transform:scaleX(1.0689);">Nom</span>
<span class="t" id="t40" style="top:572.6px;font-size:16.5px;line-height:21px;color:#111;font-weight:700;left:1497.2px;transform:scaleX(1.0840);"># Information</span>
<span class="t" id="t41" style="top:599.8px;font-size:16.5px;line-height:21px;color:#111;font-weight:700;left:1497.2px;transform:scaleX(1.0599);">qualitative</span>
<span class="t" id="t42" style="top:572.6px;font-size:16.5px;line-height:21px;color:#111;font-weight:700;left:1698.0px;transform:scaleX(1.0744);">Information</span>
<span class="t" id="t43" style="top:599.8px;font-size:16.5px;line-height:21px;color:#111;font-weight:700;left:1698.0px;transform:scaleX(1.0661);">qualitative</span>
<span class="t" id="t44" style="top:572.6px;font-size:16.5px;line-height:21px;color:#111;font-weight:700;left:1905.0px;transform:scaleX(1.0884);">#</span>
<span class="t" id="t45" style="top:599.8px;font-size:16.5px;line-height:21px;color:#111;font-weight:700;left:1905.0px;transform:scaleX(1.0310);">Interdépendances</span>
<span class="t" id="t46" style="top:572.6px;font-size:16.5px;line-height:21px;color:#111;font-weight:700;left:2083.0px;transform:scaleX(1.0280);">Gestionnaire</span>
<span class="t" id="t47" style="top:599.8px;font-size:16.5px;line-height:21px;color:#111;font-weight:700;left:2083.0px;transform:scaleX(1.0348);">d’interdépendances</span>
<svg class="a" style="left:1455.0px;top:582.0px;" width="14.0" height="27.0" viewBox="0 0 14 27"><path d="M7 1.3 L13 11 H1 Z M1 15.5 H13 L7 25.3 Z" fill="#dadada"/></svg>
<svg class="a" style="left:1656.0px;top:582.0px;" width="14.0" height="27.0" viewBox="0 0 14 27"><path d="M7 1.3 L13 11 H1 Z M1 15.5 H13 L7 25.3 Z" fill="#dadada"/></svg>
<svg class="a" style="left:2272.0px;top:582.0px;" width="14.0" height="27.0" viewBox="0 0 14 27"><path d="M7 1.3 L13 11 H1 Z M1 15.5 H13 L7 25.3 Z" fill="#dadada"/></svg>
<svg class="a" style="left:2620.4px;top:582.0px;" width="14.0" height="27.0" viewBox="0 0 14 27"><path d="M7 1.3 L13 11 H1 Z M1 15.5 H13 L7 25.3 Z" fill="#dadada"/></svg>
<span class="t" id="t48" style="top:671.2px;font-size:20.2px;line-height:26px;color:#1a1a1a;left:456.0px;transform:scaleX(1.0199);">Default Property Set</span>
<div class="a" style="left:1568.2px;top:674.3px;width:28.3px;height:27.6px;background:#6c757d;border-radius:5.5px;"></div>
<span class="t" id="t49" style="top:679.4px;font-size:13.5px;line-height:18px;color:#fff;font-weight:700;left:1578.3px;transform:scaleX(1.0911);">4</span>
<div class="a" style="left:1964.9px;top:674.3px;width:28.3px;height:27.6px;background:#6c757d;border-radius:5.5px;"></div>
<span class="t" id="t50" style="top:679.4px;font-size:13.5px;line-height:18px;color:#fff;font-weight:700;left:1975.0px;transform:scaleX(1.0911);">0</span>
<div class="a" style="left:1704.0px;top:649.3px;width:171.0px;height:67.6px;border:2px solid #979ea5;border-radius:7px;"></div>
<svg class="a" style="left:1730.4px;top:664.9px;" width="18.0" height="16.2" viewBox="0 0 17 16"><g fill="#838a91"><path d="M0 1.2 H3 V3.6 H0 Z M0 6.8 H3 V9.2 H0 Z M0 12.4 H3 V14.8 H0 Z M5 1.5 H17 V3.3 H5 Z M5 7.1 H17 V8.9 H5 Z M5 12.7 H17 V14.5 H5 Z"/></g></svg>
<span class="t" id="t51" style="top:662.4px;font-size:16px;line-height:21px;color:#838a91;left:1752.4px;transform:scaleX(1.1051);">Informations</span>
<span class="t" id="t52" style="top:688.0px;font-size:16px;line-height:21px;color:#838a91;left:1747.3px;transform:scaleX(1.0794);">qualitatives</span>
<div class="a" style="left:2093.7px;top:661.4px;width:188.3px;height:42.2px;border:2px solid #979ea5;border-radius:7px;"></div>
<svg class="a" style="left:2107.8px;top:676.9px;" width="17.4" height="15.6" viewBox="0 0 17 16"><g fill="#838a91"><path d="M0 1.2 H3 V3.6 H0 Z M0 6.8 H3 V9.2 H0 Z M0 12.4 H3 V14.8 H0 Z M5 1.5 H17 V3.3 H5 Z M5 7.1 H17 V8.9 H5 Z M5 12.7 H17 V14.5 H5 Z"/></g></svg>
<span class="t" id="t53" style="top:674.8px;font-size:16px;line-height:21px;color:#838a91;left:2130.4px;transform:scaleX(1.0655);">Interdépendances</span>
<div class="a" style="left:2384.4px;top:663.5px;width:112.8px;height:38.6px;background:#d0dae4;border-radius:6px;"></div>
<svg class="a" style="left:2397.5px;top:674.5px;" width="17.5" height="17.5" viewBox="0 0 18 18"><g fill="#fff" opacity="0.75"><path d="M12.6 0.6 C13.4 -0.2 14.6 -0.2 15.4 0.6 L17.4 2.6 C18.2 3.4 18.2 4.6 17.4 5.4 L15.8 7 L11 2.2 Z M10 3.2 L14.8 8 L5.6 17.2 L0.2 18 L1 12.4 Z"/></g></svg>
<span class="t" id="t54" style="top:674.6px;font-size:16px;line-height:21px;color:#fff;-webkit-text-stroke:0.4px #fff;opacity:.8;left:2419.6px;transform:scaleX(1.1370);">Modifier</span>
<div class="a" style="left:2504.0px;top:661.5px;width:129.0px;height:42.0px;background:#f0cfd3;border-radius:6px;"></div>
<svg class="a" style="left:2519.4px;top:674.5px;" width="14.6" height="17.6" viewBox="0 0 15 18.4"><g fill="#fff" opacity=".85"><path d="M5 0.4 H10 L10.8 1.8 H14.4 V3.8 H0.6 V1.8 H4.2 Z"/><path fill-rule="evenodd" d="M1.4 5 H13.6 L12.8 16.4 C12.7 17.3 12 18 11.1 18 H3.9 C3 18 2.3 17.3 2.2 16.4 Z M4.4 7.2 V15.6 H5.6 V7.2 Z M6.9 7.2 V15.6 H8.1 V7.2 Z M9.4 7.2 V15.6 H10.6 V7.2 Z"/></g></svg>
<span class="t" id="t55" style="top:674.6px;font-size:16px;line-height:21px;color:#fff;-webkit-text-stroke:0.4px #fff;opacity:.85;left:2538.6px;transform:scaleX(1.0811);">Supprimer</span>
<span class="t" id="t56" style="top:768.1px;font-size:20.2px;line-height:26px;color:#1a1a1a;left:456.0px;transform:scaleX(1.0176);">Public Sector - Départements</span>
<div class="a" style="left:1563.9px;top:771.3px;width:37.0px;height:27.6px;background:#6c757d;border-radius:5.5px;"></div>
<span class="t" id="t57" style="top:776.4px;font-size:13.5px;line-height:18px;color:#fff;font-weight:700;left:1574.4px;transform:scaleX(1.0644);">13</span>
<div class="a" style="left:1964.9px;top:771.3px;width:28.3px;height:27.6px;background:#6c757d;border-radius:5.5px;"></div>
<span class="t" id="t58" style="top:776.4px;font-size:13.5px;line-height:18px;color:#fff;font-weight:700;left:1975.0px;transform:scaleX(1.0911);">0</span>
<div class="a" style="left:1704.0px;top:746.2px;width:171.0px;height:67.6px;border:2px solid #979ea5;border-radius:7px;"></div>
<svg class="a" style="left:1730.4px;top:761.9px;" width="18.0" height="16.2" viewBox="0 0 17 16"><g fill="#838a91"><path d="M0 1.2 H3 V3.6 H0 Z M0 6.8 H3 V9.2 H0 Z M0 12.4 H3 V14.8 H0 Z M5 1.5 H17 V3.3 H5 Z M5 7.1 H17 V8.9 H5 Z M5 12.7 H17 V14.5 H5 Z"/></g></svg>
<span class="t" id="t59" style="top:759.4px;font-size:16px;line-height:21px;color:#838a91;left:1752.4px;transform:scaleX(1.1051);">Informations</span>
<span class="t" id="t60" style="top:785.0px;font-size:16px;line-height:21px;color:#838a91;left:1747.3px;transform:scaleX(1.0794);">qualitatives</span>
<div class="a" style="left:2093.7px;top:758.4px;width:188.3px;height:42.2px;border:2px solid #979ea5;border-radius:7px;"></div>
<svg class="a" style="left:2107.8px;top:773.9px;" width="17.4" height="15.6" viewBox="0 0 17 16"><g fill="#838a91"><path d="M0 1.2 H3 V3.6 H0 Z M0 6.8 H3 V9.2 H0 Z M0 12.4 H3 V14.8 H0 Z M5 1.5 H17 V3.3 H5 Z M5 7.1 H17 V8.9 H5 Z M5 12.7 H17 V14.5 H5 Z"/></g></svg>
<span class="t" id="t61" style="top:771.8px;font-size:16px;line-height:21px;color:#838a91;left:2130.4px;transform:scaleX(1.0655);">Interdépendances</span>
<div class="a" style="left:2384.4px;top:760.5px;width:112.8px;height:38.6px;background:#4f7fa5;border-radius:6px;"></div>
<svg class="a" style="left:2397.5px;top:771.5px;" width="17.5" height="17.5" viewBox="0 0 18 18"><g fill="#fff" opacity="1"><path d="M12.6 0.6 C13.4 -0.2 14.6 -0.2 15.4 0.6 L17.4 2.6 C18.2 3.4 18.2 4.6 17.4 5.4 L15.8 7 L11 2.2 Z M10 3.2 L14.8 8 L5.6 17.2 L0.2 18 L1 12.4 Z"/></g></svg>
<span class="t" id="t62" style="top:771.6px;font-size:16px;line-height:21px;color:#fff;-webkit-text-stroke:0.4px #fff;left:2419.6px;transform:scaleX(1.1370);">Modifier</span>
<div class="a" style="left:2504.0px;top:758.5px;width:129.0px;height:42.0px;background:#f6dadd;border-radius:6px;"></div>
<svg class="a" style="left:2519.4px;top:771.5px;" width="14.6" height="17.6" viewBox="0 0 15 18.4"><g fill="#fff" opacity=".85"><path d="M5 0.4 H10 L10.8 1.8 H14.4 V3.8 H0.6 V1.8 H4.2 Z"/><path fill-rule="evenodd" d="M1.4 5 H13.6 L12.8 16.4 C12.7 17.3 12 18 11.1 18 H3.9 C3 18 2.3 17.3 2.2 16.4 Z M4.4 7.2 V15.6 H5.6 V7.2 Z M6.9 7.2 V15.6 H8.1 V7.2 Z M9.4 7.2 V15.6 H10.6 V7.2 Z"/></g></svg>
<span class="t" id="t63" style="top:771.6px;font-size:16px;line-height:21px;color:#fff;-webkit-text-stroke:0.4px #fff;opacity:.85;left:2538.6px;transform:scaleX(1.0811);">Supprimer</span>
<span class="t" id="t64" style="top:865.1px;font-size:20.2px;line-height:26px;color:#1a1a1a;left:456.0px;transform:scaleX(1.0167);">Public Sector - Ministères</span>
<div class="a" style="left:1563.9px;top:868.2px;width:37.0px;height:27.6px;background:#6c757d;border-radius:5.5px;"></div>
<span class="t" id="t65" style="top:873.3px;font-size:13.5px;line-height:18px;color:#fff;font-weight:700;left:1574.4px;transform:scaleX(1.0644);">13</span>
<div class="a" style="left:1964.9px;top:868.2px;width:28.3px;height:27.6px;background:#6c757d;border-radius:5.5px;"></div>
<span class="t" id="t66" style="top:873.3px;font-size:13.5px;line-height:18px;color:#fff;font-weight:700;left:1975.0px;transform:scaleX(1.0911);">1</span>
<div class="a" style="left:1704.0px;top:843.2px;width:171.0px;height:67.6px;border:2px solid #979ea5;border-radius:7px;"></div>
<svg class="a" style="left:1730.4px;top:858.8px;" width="18.0" height="16.2" viewBox="0 0 17 16"><g fill="#838a91"><path d="M0 1.2 H3 V3.6 H0 Z M0 6.8 H3 V9.2 H0 Z M0 12.4 H3 V14.8 H0 Z M5 1.5 H17 V3.3 H5 Z M5 7.1 H17 V8.9 H5 Z M5 12.7 H17 V14.5 H5 Z"/></g></svg>
<span class="t" id="t67" style="top:856.3px;font-size:16px;line-height:21px;color:#838a91;left:1752.4px;transform:scaleX(1.1051);">Informations</span>
<span class="t" id="t68" style="top:881.9px;font-size:16px;line-height:21px;color:#838a91;left:1747.3px;transform:scaleX(1.0794);">qualitatives</span>
<div class="a" style="left:2093.7px;top:855.3px;width:188.3px;height:42.2px;border:2px solid #979ea5;border-radius:7px;"></div>
<svg class="a" style="left:2107.8px;top:870.8px;" width="17.4" height="15.6" viewBox="0 0 17 16"><g fill="#838a91"><path d="M0 1.2 H3 V3.6 H0 Z M0 6.8 H3 V9.2 H0 Z M0 12.4 H3 V14.8 H0 Z M5 1.5 H17 V3.3 H5 Z M5 7.1 H17 V8.9 H5 Z M5 12.7 H17 V14.5 H5 Z"/></g></svg>
<span class="t" id="t69" style="top:868.7px;font-size:16px;line-height:21px;color:#838a91;left:2130.4px;transform:scaleX(1.0655);">Interdépendances</span>
<div class="a" style="left:2384.4px;top:857.4px;width:112.8px;height:38.6px;background:#4f7fa5;border-radius:6px;"></div>
<svg class="a" style="left:2397.5px;top:868.4px;" width="17.5" height="17.5" viewBox="0 0 18 18"><g fill="#fff" opacity="1"><path d="M12.6 0.6 C13.4 -0.2 14.6 -0.2 15.4 0.6 L17.4 2.6 C18.2 3.4 18.2 4.6 17.4 5.4 L15.8 7 L11 2.2 Z M10 3.2 L14.8 8 L5.6 17.2 L0.2 18 L1 12.4 Z"/></g></svg>
<span class="t" id="t70" style="top:868.5px;font-size:16px;line-height:21px;color:#fff;-webkit-text-stroke:0.4px #fff;left:2419.6px;transform:scaleX(1.1370);">Modifier</span>
<div class="a" style="left:2504.0px;top:855.4px;width:129.0px;height:42.0px;background:#f0cfd3;border-radius:6px;"></div>
<svg class="a" style="left:2519.4px;top:868.4px;" width="14.6" height="17.6" viewBox="0 0 15 18.4"><g fill="#fff" opacity=".85"><path d="M5 0.4 H10 L10.8 1.8 H14.4 V3.8 H0.6 V1.8 H4.2 Z"/><path fill-rule="evenodd" d="M1.4 5 H13.6 L12.8 16.4 C12.7 17.3 12 18 11.1 18 H3.9 C3 18 2.3 17.3 2.2 16.4 Z M4.4 7.2 V15.6 H5.6 V7.2 Z M6.9 7.2 V15.6 H8.1 V7.2 Z M9.4 7.2 V15.6 H10.6 V7.2 Z"/></g></svg>
<span class="t" id="t71" style="top:868.5px;font-size:16px;line-height:21px;color:#fff;-webkit-text-stroke:0.4px #fff;opacity:.85;left:2538.6px;transform:scaleX(1.0811);">Supprimer</span>
<span class="t" id="t72" style="top:962.0px;font-size:20.2px;line-height:26px;color:#1a1a1a;left:456.0px;transform:scaleX(1.0385);">Public sector - Pilotage de l'action publique</span>
<div class="a" style="left:1568.2px;top:965.2px;width:28.3px;height:27.6px;background:#6c757d;border-radius:5.5px;"></div>
<span class="t" id="t73" style="top:970.2px;font-size:13.5px;line-height:18px;color:#fff;font-weight:700;left:1578.3px;transform:scaleX(1.0911);">8</span>
<div class="a" style="left:1964.9px;top:965.2px;width:28.3px;height:27.6px;background:#6c757d;border-radius:5.5px;"></div>
<span class="t" id="t74" style="top:970.2px;font-size:13.5px;line-height:18px;color:#fff;font-weight:700;left:1975.0px;transform:scaleX(1.0911);">0</span>
<div class="a" style="left:1704.0px;top:940.1px;width:171.0px;height:67.6px;border:2px solid #979ea5;border-radius:7px;"></div>
<svg class="a" style="left:1730.4px;top:955.8px;" width="18.0" height="16.2" viewBox="0 0 17 16"><g fill="#838a91"><path d="M0 1.2 H3 V3.6 H0 Z M0 6.8 H3 V9.2 H0 Z M0 12.4 H3 V14.8 H0 Z M5 1.5 H17 V3.3 H5 Z M5 7.1 H17 V8.9 H5 Z M5 12.7 H17 V14.5 H5 Z"/></g></svg>
<span class="t" id="t75" style="top:953.2px;font-size:16px;line-height:21px;color:#838a91;left:1752.4px;transform:scaleX(1.1051);">Informations</span>
<span class="t" id="t76" style="top:978.9px;font-size:16px;line-height:21px;color:#838a91;left:1747.3px;transform:scaleX(1.0794);">qualitatives</span>
<div class="a" style="left:2093.7px;top:952.2px;width:188.3px;height:42.2px;border:2px solid #979ea5;border-radius:7px;"></div>
<svg class="a" style="left:2107.8px;top:967.8px;" width="17.4" height="15.6" viewBox="0 0 17 16"><g fill="#838a91"><path d="M0 1.2 H3 V3.6 H0 Z M0 6.8 H3 V9.2 H0 Z M0 12.4 H3 V14.8 H0 Z M5 1.5 H17 V3.3 H5 Z M5 7.1 H17 V8.9 H5 Z M5 12.7 H17 V14.5 H5 Z"/></g></svg>
<span class="t" id="t77" style="top:965.6px;font-size:16px;line-height:21px;color:#838a91;left:2130.4px;transform:scaleX(1.0655);">Interdépendances</span>
<div class="a" style="left:2384.4px;top:954.4px;width:112.8px;height:38.6px;background:#4f7fa5;border-radius:6px;"></div>
<svg class="a" style="left:2397.5px;top:965.4px;" width="17.5" height="17.5" viewBox="0 0 18 18"><g fill="#fff" opacity="1"><path d="M12.6 0.6 C13.4 -0.2 14.6 -0.2 15.4 0.6 L17.4 2.6 C18.2 3.4 18.2 4.6 17.4 5.4 L15.8 7 L11 2.2 Z M10 3.2 L14.8 8 L5.6 17.2 L0.2 18 L1 12.4 Z"/></g></svg>
<span class="t" id="t78" style="top:965.5px;font-size:16px;line-height:21px;color:#fff;-webkit-text-stroke:0.4px #fff;left:2419.6px;transform:scaleX(1.1370);">Modifier</span>
<div class="a" style="left:2504.0px;top:952.4px;width:129.0px;height:42.0px;background:#f6dadd;border-radius:6px;"></div>
<svg class="a" style="left:2519.4px;top:965.4px;" width="14.6" height="17.6" viewBox="0 0 15 18.4"><g fill="#fff" opacity=".85"><path d="M5 0.4 H10 L10.8 1.8 H14.4 V3.8 H0.6 V1.8 H4.2 Z"/><path fill-rule="evenodd" d="M1.4 5 H13.6 L12.8 16.4 C12.7 17.3 12 18 11.1 18 H3.9 C3 18 2.3 17.3 2.2 16.4 Z M4.4 7.2 V15.6 H5.6 V7.2 Z M6.9 7.2 V15.6 H8.1 V7.2 Z M9.4 7.2 V15.6 H10.6 V7.2 Z"/></g></svg>
<span class="t" id="t79" style="top:965.5px;font-size:16px;line-height:21px;color:#fff;-webkit-text-stroke:0.4px #fff;opacity:.85;left:2538.6px;transform:scaleX(1.0811);">Supprimer</span>
<span class="t" id="t80" style="top:1059.0px;font-size:20.2px;line-height:26px;color:#1a1a1a;left:456.0px;transform:scaleX(1.0041);">Public Sector - Réformes</span>
<div class="a" style="left:1563.9px;top:1062.1px;width:37.0px;height:27.6px;background:#6c757d;border-radius:5.5px;"></div>
<span class="t" id="t81" style="top:1067.2px;font-size:13.5px;line-height:18px;color:#fff;font-weight:700;left:1574.4px;transform:scaleX(1.0644);">13</span>
<div class="a" style="left:1964.9px;top:1062.1px;width:28.3px;height:27.6px;background:#6c757d;border-radius:5.5px;"></div>
<span class="t" id="t82" style="top:1067.2px;font-size:13.5px;line-height:18px;color:#fff;font-weight:700;left:1975.0px;transform:scaleX(1.0911);">2</span>
<div class="a" style="left:1704.0px;top:1037.1px;width:171.0px;height:67.6px;border:2px solid #979ea5;border-radius:7px;"></div>
<svg class="a" style="left:1730.4px;top:1052.7px;" width="18.0" height="16.2" viewBox="0 0 17 16"><g fill="#838a91"><path d="M0 1.2 H3 V3.6 H0 Z M0 6.8 H3 V9.2 H0 Z M0 12.4 H3 V14.8 H0 Z M5 1.5 H17 V3.3 H5 Z M5 7.1 H17 V8.9 H5 Z M5 12.7 H17 V14.5 H5 Z"/></g></svg>
<span class="t" id="t83" style="top:1050.2px;font-size:16px;line-height:21px;color:#838a91;left:1752.4px;transform:scaleX(1.1051);">Informations</span>
<span class="t" id="t84" style="top:1075.8px;font-size:16px;line-height:21px;color:#838a91;left:1747.3px;transform:scaleX(1.0794);">qualitatives</span>
<div class="a" style="left:2093.7px;top:1049.2px;width:188.3px;height:42.2px;border:2px solid #979ea5;border-radius:7px;"></div>
<svg class="a" style="left:2107.8px;top:1064.7px;" width="17.4" height="15.6" viewBox="0 0 17 16"><g fill="#838a91"><path d="M0 1.2 H3 V3.6 H0 Z M0 6.8 H3 V9.2 H0 Z M0 12.4 H3 V14.8 H0 Z M5 1.5 H17 V3.3 H5 Z M5 7.1 H17 V8.9 H5 Z M5 12.7 H17 V14.5 H5 Z"/></g></svg>
<span class="t" id="t85" style="top:1062.6px;font-size:16px;line-height:21px;color:#838a91;left:2130.4px;transform:scaleX(1.0655);">Interdépendances</span>
<div class="a" style="left:2384.4px;top:1051.3px;width:112.8px;height:38.6px;background:#4f7fa5;border-radius:6px;"></div>
<svg class="a" style="left:2397.5px;top:1062.3px;" width="17.5" height="17.5" viewBox="0 0 18 18"><g fill="#fff" opacity="1"><path d="M12.6 0.6 C13.4 -0.2 14.6 -0.2 15.4 0.6 L17.4 2.6 C18.2 3.4 18.2 4.6 17.4 5.4 L15.8 7 L11 2.2 Z M10 3.2 L14.8 8 L5.6 17.2 L0.2 18 L1 12.4 Z"/></g></svg>
<span class="t" id="t86" style="top:1062.4px;font-size:16px;line-height:21px;color:#fff;-webkit-text-stroke:0.4px #fff;left:2419.6px;transform:scaleX(1.1370);">Modifier</span>
<div class="a" style="left:2504.0px;top:1049.3px;width:129.0px;height:42.0px;background:#f0cfd3;border-radius:6px;"></div>
<svg class="a" style="left:2519.4px;top:1062.3px;" width="14.6" height="17.6" viewBox="0 0 15 18.4"><g fill="#fff" opacity=".85"><path d="M5 0.4 H10 L10.8 1.8 H14.4 V3.8 H0.6 V1.8 H4.2 Z"/><path fill-rule="evenodd" d="M1.4 5 H13.6 L12.8 16.4 C12.7 17.3 12 18 11.1 18 H3.9 C3 18 2.3 17.3 2.2 16.4 Z M4.4 7.2 V15.6 H5.6 V7.2 Z M6.9 7.2 V15.6 H8.1 V7.2 Z M9.4 7.2 V15.6 H10.6 V7.2 Z"/></g></svg>
<span class="t" id="t87" style="top:1062.4px;font-size:16px;line-height:21px;color:#fff;-webkit-text-stroke:0.4px #fff;opacity:.85;left:2538.6px;transform:scaleX(1.0811);">Supprimer</span>
<span class="t" id="t88" style="top:1155.9px;font-size:20.2px;line-height:26px;color:#1a1a1a;left:456.0px;">Public Sector - Régions</span>
<div class="a" style="left:1563.9px;top:1159.0px;width:37.0px;height:27.6px;background:#6c757d;border-radius:5.5px;"></div>
<span class="t" id="t89" style="top:1164.1px;font-size:13.5px;line-height:18px;color:#fff;font-weight:700;left:1574.4px;transform:scaleX(1.1204);">11</span>
<div class="a" style="left:1964.9px;top:1159.0px;width:28.3px;height:27.6px;background:#6c757d;border-radius:5.5px;"></div>
<span class="t" id="t90" style="top:1164.1px;font-size:13.5px;line-height:18px;color:#fff;font-weight:700;left:1975.0px;transform:scaleX(1.0911);">1</span>
<div class="a" style="left:1704.0px;top:1134.0px;width:171.0px;height:67.6px;border:2px solid #979ea5;border-radius:7px;"></div>
<svg class="a" style="left:1730.4px;top:1149.7px;" width="18.0" height="16.2" viewBox="0 0 17 16"><g fill="#838a91"><path d="M0 1.2 H3 V3.6 H0 Z M0 6.8 H3 V9.2 H0 Z M0 12.4 H3 V14.8 H0 Z M5 1.5 H17 V3.3 H5 Z M5 7.1 H17 V8.9 H5 Z M5 12.7 H17 V14.5 H5 Z"/></g></svg>
<span class="t" id="t91" style="top:1147.2px;font-size:16px;line-height:21px;color:#838a91;left:1752.4px;transform:scaleX(1.1051);">Informations</span>
<span class="t" id="t92" style="top:1172.8px;font-size:16px;line-height:21px;color:#838a91;left:1747.3px;transform:scaleX(1.0794);">qualitatives</span>
<div class="a" style="left:2093.7px;top:1146.2px;width:188.3px;height:42.2px;border:2px solid #979ea5;border-radius:7px;"></div>
<svg class="a" style="left:2107.8px;top:1161.7px;" width="17.4" height="15.6" viewBox="0 0 17 16"><g fill="#838a91"><path d="M0 1.2 H3 V3.6 H0 Z M0 6.8 H3 V9.2 H0 Z M0 12.4 H3 V14.8 H0 Z M5 1.5 H17 V3.3 H5 Z M5 7.1 H17 V8.9 H5 Z M5 12.7 H17 V14.5 H5 Z"/></g></svg>
<span class="t" id="t93" style="top:1159.5px;font-size:16px;line-height:21px;color:#838a91;left:2130.4px;transform:scaleX(1.0655);">Interdépendances</span>
<div class="a" style="left:2384.4px;top:1148.2px;width:112.8px;height:38.6px;background:#4f7fa5;border-radius:6px;"></div>
<svg class="a" style="left:2397.5px;top:1159.2px;" width="17.5" height="17.5" viewBox="0 0 18 18"><g fill="#fff" opacity="1"><path d="M12.6 0.6 C13.4 -0.2 14.6 -0.2 15.4 0.6 L17.4 2.6 C18.2 3.4 18.2 4.6 17.4 5.4 L15.8 7 L11 2.2 Z M10 3.2 L14.8 8 L5.6 17.2 L0.2 18 L1 12.4 Z"/></g></svg>
<span class="t" id="t94" style="top:1159.3px;font-size:16px;line-height:21px;color:#fff;-webkit-text-stroke:0.4px #fff;left:2419.6px;transform:scaleX(1.1370);">Modifier</span>
<div class="a" style="left:2504.0px;top:1146.2px;width:129.0px;height:42.0px;background:#f6dadd;border-radius:6px;"></div>
<svg class="a" style="left:2519.4px;top:1159.2px;" width="14.6" height="17.6" viewBox="0 0 15 18.4"><g fill="#fff" opacity=".85"><path d="M5 0.4 H10 L10.8 1.8 H14.4 V3.8 H0.6 V1.8 H4.2 Z"/><path fill-rule="evenodd" d="M1.4 5 H13.6 L12.8 16.4 C12.7 17.3 12 18 11.1 18 H3.9 C3 18 2.3 17.3 2.2 16.4 Z M4.4 7.2 V15.6 H5.6 V7.2 Z M6.9 7.2 V15.6 H8.1 V7.2 Z M9.4 7.2 V15.6 H10.6 V7.2 Z"/></g></svg>
<span class="t" id="t95" style="top:1159.3px;font-size:16px;line-height:21px;color:#fff;-webkit-text-stroke:0.4px #fff;opacity:.85;left:2538.6px;transform:scaleX(1.0811);">Supprimer</span>
<span class="t" id="t96" style="top:1236.5px;font-size:16.5px;line-height:21px;color:#a3a3a3;left:428.0px;transform:scaleX(1.0503);">Showing 1 to 6 of 6 entries</span>
<div class="a" style="left:2430.0px;top:1253.0px;width:218.5px;height:46.6px;background:#fff;border:1.6px solid #e6e8ea;border-radius:4px;"></div>
<div class="a" style="left:2529.5px;top:1252.4px;width:46.2px;height:47.8px;background:#4f7fa5;"></div>
<div class="a" style="left:2575.7px;top:1253.0px;width:1.4px;height:46.6px;background:#e6e8ea;"></div>
<span class="t" id="t97" style="top:1265.0px;font-size:17px;line-height:22px;color:#6a7076;left:2447.6px;transform:scaleX(0.9782);">Previous</span>
<span class="t" id="t98" style="top:1265.4px;font-size:17px;line-height:22px;color:#fff;font-weight:700;left:2547.9px;">1</span>
<span class="t" id="t99" style="top:1265.0px;font-size:17px;line-height:22px;color:#6a7076;left:2594.3px;transform:scaleX(1.0152);">Next</span>
<span class="t" id="t100" style="top:1424.3px;font-size:16px;line-height:21px;color:#5b6b80;left:1435.0px;transform:scaleX(1.0756);"><span style="color:#333">©</span> <b style="color:#222">proPilot</b> - Version <i>4.14.0</i></span>
<div class="a" style="left:10.6px;top:1062.0px;width:105.4px;height:105.4px;background:#203f7a;border:3.2px solid #fff;border-radius:50%;box-shadow:5px 8px 14px rgba(0,0,0,.42);"></div>
<span class="t" id="t101" style="top:1080.3px;font-size:55px;line-height:72px;color:#fff;font-family:'DejaVu Sans','Liberation Sans',sans-serif;left:49.0px;transform:scaleX(0.8857);">1</span>
<div class="a" style="left:930.5px;top:266.5px;width:105.4px;height:105.4px;background:#203f7a;border:3.2px solid #fff;border-radius:50%;box-shadow:5px 8px 14px rgba(0,0,0,.42);"></div>
<span class="t" id="t102" style="top:283.6px;font-size:57.4px;line-height:75px;color:#fff;left:968.5px;transform:scaleX(0.9241);">2</span>
<div class="a" style="left:1999.7px;top:649.1px;width:105.4px;height:105.4px;background:#203f7a;border:3.2px solid #fff;border-radius:50%;box-shadow:5px 8px 14px rgba(0,0,0,.42);"></div>
<span class="t" id="t103" style="top:666.2px;font-size:57.4px;line-height:75px;color:#fff;left:2037.7px;transform:scaleX(0.9241);">3</span>
<div class="a" style="left:15px;top:3px;width:2704.2px;height:1840px;border:2.9px solid #e8e8e6;border-radius:27px;"></div>
<div class="a" style="left:15px;top:3px;width:2704.2px;height:1840px;border:2.9px solid #d9d9d7;border-radius:27px;clip-path:inset(0 0 1716px 0);"></div>
</body></html>
